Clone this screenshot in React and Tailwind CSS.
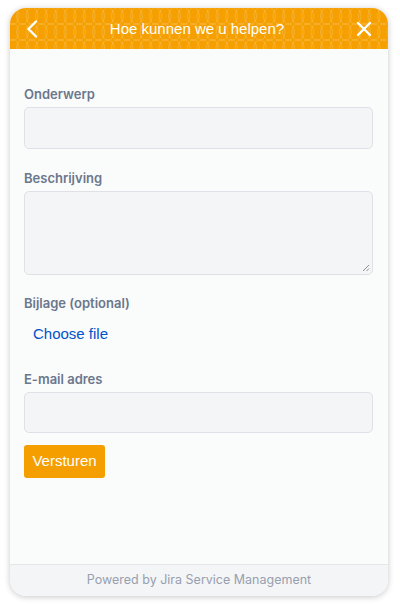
import React from "react";

function HeaderPattern() {
  const ellipses = [];
  for (let r = 0; r < 4; r++) {
    for (let c = 0; c < 42; c++) {
      ellipses.push(
        <ellipse key={`${r}-${c}`} cx={c * 9.5 + 3} cy={r * 16 + 8} rx="6" ry="8.5" fill="none" stroke="rgba(255,255,255,0.22)" strokeWidth="0.8" />
      );
    }
  }
  return (
    <svg className="absolute inset-0 w-full h-full" viewBox="0 0 378 41" preserveAspectRatio="xMinYMin slice">
      {ellipses}
    </svg>
  );
}

export default function App() {
  return (
    <div className="w-[400px] h-[604px] bg-white pt-[8px] pl-[10px]" style={{ fontFamily: "Inter, 'Liberation Sans', sans-serif" }}>
      <div className="w-[378px] h-[588px] rounded-[16px] overflow-hidden bg-[#fafbfb] shadow-[0_1px_6px_rgba(0,0,0,0.22)] flex flex-col">
        <div className="relative h-[41px] bg-[#f5a000] flex items-center justify-between px-[16px] shrink-0">
          <HeaderPattern />
          <svg className="relative" width="12" height="18" viewBox="0 0 12 18">
            <path d="M10 1.5 L2.5 9 L10 16.5" fill="none" stroke="white" strokeWidth="2.4" strokeLinecap="round" strokeLinejoin="round" />
          </svg>
          <span className="relative text-white text-[15px] leading-none" style={{ fontFamily: "'Liberation Sans', sans-serif" }}>Hoe kunnen we u helpen?</span>
          <svg className="relative" width="16" height="16" viewBox="0 0 16 16">
            <path d="M2 2 L14 14 M14 2 L2 14" fill="none" stroke="white" strokeWidth="2.4" strokeLinecap="round" />
          </svg>
        </div>
        <div className="flex-1 px-[14px] pt-[37px] flex flex-col">
          <label className="text-[13px] font-semibold text-[#6b778c] leading-[16px]">Onderwerp</label>
          <div className="mt-[5px] w-[349px] h-[42px] rounded-[5px] bg-[#f4f5f7] border border-[#dfe1e6]" />
          <label className="mt-[21px] text-[13px] font-semibold text-[#6b778c] leading-[16px]">Beschrijving</label>
          <div className="relative mt-[5px] w-[349px] h-[84px] rounded-[5px] bg-[#f4f5f7] border border-[#dfe1e6]">
            <svg className="absolute right-[2px] bottom-[2px]" width="8" height="8" viewBox="0 0 8 8">
              <path d="M7 1 L1 7 M7 4.5 L4.5 7" stroke="#8a8f98" strokeWidth="1" fill="none" />
            </svg>
          </div>
          <label className="mt-[20px] text-[13px] font-semibold text-[#6b778c] leading-[16px]">Bijlage (optional)</label>
          <div className="mt-[14px] pl-[9px] text-[15px] text-[#0052cc] leading-[18px]" style={{ fontFamily: "'Liberation Sans', sans-serif" }}>Choose file</div>
          <label className="mt-[28px] text-[13px] font-semibold text-[#6b778c] leading-[16px]">E-mail adres</label>
          <div className="mt-[5px] w-[349px] h-[41px] rounded-[5px] bg-[#f4f5f7] border border-[#dfe1e6]" />
          <div className="mt-[12px]">
            <button className="w-[81px] h-[33px] rounded-[3px] bg-[#f59e00] text-white text-[15px]" style={{ fontFamily: "'Liberation Sans', sans-serif" }}>Versturen</button>
          </div>
        </div>
        <div className="h-[32px] shrink-0 border-t border-[#e4e6ea] bg-[#f4f5f7] flex items-center justify-center text-[12.5px] text-[#97a0af]" style={{ fontFamily: "Inter, sans-serif" }}>
          Powered by Jira Service Management
        </div>
      </div>
    </div>
  );
}
